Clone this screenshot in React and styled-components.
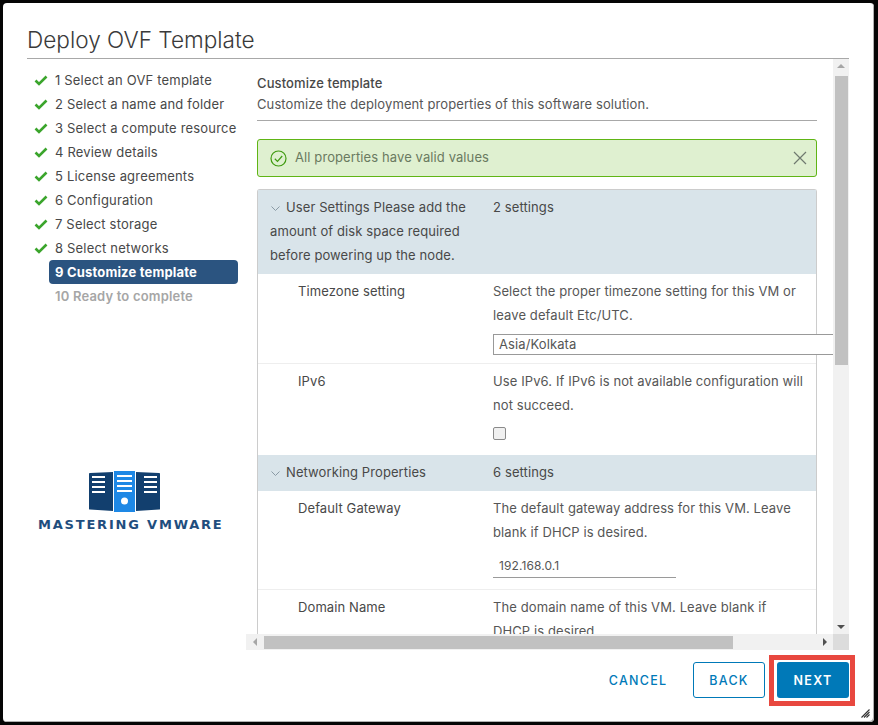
import React from "react";
import styled, { createGlobalStyle } from "styled-components";

const Global = createGlobalStyle`
  html, body { margin: 0; padding: 0; background: #000; }
  * { box-sizing: border-box; }
  body { font-family: Inter, "Open Sans", sans-serif; color: #565656; }
`;
const Page = styled.div`
  width: 878px; height: 725px; padding: 3px 4px 3px 3px; background: #050505; overflow: hidden;
`;
const Dialog = styled.div`
  position: relative; width: 871px; height: 719px; background: #fff; border-radius: 4px;
  display: flex; flex-direction: column; box-shadow: inset -1px -1px 0 #b0b0b0;
`;
const Header = styled.header`
  margin: 0 25px 0 24px; height: 56px; border-bottom: 1px solid #a8a8a8; padding-top: 22px;
`;
const Title = styled.h1`
  margin: 0; font-size: 22.6px; line-height: 30px; font-weight: 300; color: #3a3a3a; white-space: nowrap;
`;
const Body = styled.div`
  display: flex; height: 591px; margin-right: 25px;
`;
const Side = styled.aside`
  width: 243px; flex: none; padding: 9px 8px 0 32px; display: flex; flex-direction: column;
`;
const Step = styled.div`
  height: 24px; display: flex; align-items: center; font-size: 13px; letter-spacing: 0.18px; white-space: nowrap;
  font-weight: ${p => (p.$active ? 700 : p.$todo ? 600 : 400)};
  color: ${p => (p.$active ? "#fff" : p.$todo ? "#a6a6a6" : "#484848")};
  margin-left: 14px; padding-left: 6px; position: relative; border-radius: 4px;
  background: ${p => (p.$active ? "#2b5480" : "transparent")};
`;
const StepCheck = styled.svg`
  position: absolute; left: -15px; top: 6px; width: 14px; height: 12px;
`;
const Logo = styled.div`
  margin: 163px 0 0 3px; width: 190px; display: flex; flex-direction: column; align-items: flex-start;
`;
const LogoIcon = styled.svg`
  margin-left: 51px; flex: none;
`;
const LogoText = styled.div`
  font-family: "DejaVu Sans", sans-serif; font-weight: 700; font-size: 13px; letter-spacing: 1.8px;
  color: #1f4e7e; line-height: 14px; margin-top: 6px; white-space: nowrap;
`;
const Panel = styled.section`
  width: 603px; flex: none; display: grid; grid-template-columns: 587px 16px; grid-template-rows: 575px 16px;
`;
const Viewport = styled.div`
  overflow: hidden; padding: 14px 16px 0 11px;
`;
const Heading = styled.div`
  font-size: 13px; letter-spacing: 0.1px; font-weight: 500; line-height: 20px; color: #484848;
`;
const Sub = styled.div`
  font-size: 13px; letter-spacing: 0.1px; line-height: 20px; color: #565656; white-space: nowrap;
  padding: 1px 0 6px; border-bottom: 1px solid #a8a8a8;
`;
const Alert = styled.div`
  margin-top: 18px; height: 38px; border: 1px solid #60b515; border-radius: 3px; background: #dff0d0;
  display: flex; align-items: center; padding: 0 9px 0 12px; font-size: 13px; letter-spacing: 0.1px; color: #6a7a60;
`;
const AlertText = styled.span` margin: 0 0 2px 8px; flex: 1; `;
const Table = styled.div`
  margin-top: 12px; border: 1px solid #ccc; border-bottom: none; border-radius: 3px 3px 0 0;
`;
const Group = styled.div`
  display: grid; grid-template-columns: 235px minmax(0, 1fr); background: #d9e4ea; padding: 5px 0 7px; color: #484848;
  font-size: 13px; letter-spacing: 0.1px; line-height: 24px;
`;
const GroupName = styled.div` padding-left: 12px; padding-right: 10px; `;
const Chevron = styled.svg` width: 11px; height: 7px; margin-right: 5px; `;
const Row = styled.div`
  display: grid; grid-template-columns: 235px minmax(0, 1fr); padding: 5px 0 ${p => p.$pb}px; font-size: 13px; letter-spacing: 0.1px; line-height: 24px;
  border-bottom: ${p => (p.$line ? "1px solid #eee" : "none")};
`;
const Label = styled.div` padding-left: 40px; color: #484848; `;
const Desc = styled.div` padding-right: ${p => p.$pr ?? 14}px; color: #565656; `;
const SelectBox = styled.div`
  width: 360px; height: 21px; margin-top: 7px; border: 1px solid #999; border-right: none; padding-left: 5px;
  font-size: 13px; line-height: 19px; color: #565656; background: #fff;
`;
const Check = styled.div`
  width: 13px; height: 13px; margin-top: 10px; border: 1px solid #8a8a8a; border-radius: 2px; background: #f0f0f0;
`;
const TextInput = styled.div`
  width: 183px; height: 23px; margin-top: 11px; border-bottom: 1px solid #9a9a9a; padding-left: 6px;
  font-size: 12px; line-height: 21px; color: #565656;
`;
const VBar = styled.div`
  background: #f1f1f1; display: flex; flex-direction: column; align-items: center; padding-top: 5px;
`;
const Thumb = styled.div`
  background: #c1c1c1; flex: none;
`;
const VThumb = styled(Thumb)` width: 13px; height: 289px; margin-top: 8px; `;
const Arrow = styled.div`
  width: 0; height: 0; flex: none; border-style: solid;
`;
const ArrowUp = styled(Arrow)` border-width: 0 4px 4px; border-color: transparent transparent #a6a6a6; `;
const ArrowDown = styled(Arrow)` border-width: 4px 4px 0; border-color: #505050 transparent transparent; margin-top: auto; margin-bottom: 5px; `;
const HBar = styled.div`
  background: #f1f1f1; display: flex; align-items: center; padding-left: 7px;
`;
const ArrowLeft = styled(Arrow)` border-width: 4px 4px 4px 0; border-color: transparent #a6a6a6 transparent transparent; `;
const HThumb = styled(Thumb)` width: 469px; height: 13px; margin-left: 7px; `;
const ArrowRight = styled(Arrow)` border-width: 4px 0 4px 4px; border-color: transparent transparent transparent #505050; margin-left: auto; margin-right: 6px; `;
const Corner = styled.div` background: #dcdcdc; `;
const Footer = styled.footer`
  flex: 1; display: flex; align-items: flex-start; justify-content: flex-end; padding: 12px 25px 0 0; gap: 12px;
`;
const Btn = styled.div`
  width: 72px; height: 36px; border-radius: 3px; display: flex; align-items: center; justify-content: center;
  padding-top: 1px; font-size: 12.5px; font-weight: 500; letter-spacing: 1.25px;
  color: ${p => (p.$primary ? "#fff" : "#0079b8")};
  background: ${p => (p.$primary ? "#0079b8" : "#fff")};
  border: ${p => (p.$outline ? "1px solid #0079b8" : "none")};
  margin-right: ${p => p.$mr || 0}px;
  ${p => p.$primary && "font-weight: 600;"}
`;
const Highlight = styled.div`
  position: absolute; left: 766px; top: 652px; width: 86px; height: 51px; border: 5px solid #e8483f;
`;
const Grip = styled.svg`
  position: absolute; left: 858px; top: 706px; width: 9px; height: 9px;
`;

const steps = ["1 Select an OVF template","2 Select a name and folder","3 Select a compute resource","4 Review details","5 License agreements","6 Configuration","7 Select storage","8 Select networks"];

const Tick = () => (
  <StepCheck viewBox="0 0 14 12"><path d="M1.5 6.5 L5 10 L12.5 2.5" fill="none" stroke="#3ba52c" strokeWidth="2.6" /></StepCheck>
);
const Chev = () => (
  <Chevron viewBox="0 0 11 7"><path d="M1.5 1.5 L5.5 5.5 L9.5 1.5" fill="none" stroke="#8a9aa5" strokeWidth="1" /></Chevron>
);

export default function App() {
  return (
    <Page>
      <Global />
      <Dialog>
        <Header><Title>Deploy OVF Template</Title></Header>
        <Body>
          <Side>
            {steps.map(s => <Step key={s}><Tick />{s}</Step>)}
            <Step $active>9 Customize template</Step>
            <Step $todo>10 Ready to complete</Step>
            <Logo>
              <LogoIcon width="72" height="41" viewBox="0 0 72 41">
                <path d="M0 2.5 Q0 2 1 2 L24 1 V40 L1 38.5 Q0 38.5 0 38 Z" fill="#123f6e" />
                <path d="M71 2.5 Q71 2 70 2 L47 1 V40 L70 38.5 Q71 38.5 71 38 Z" fill="#123f6e" />
                <rect x="25" y="0" width="21" height="41" fill="#1e88e5" />
                <path d="M3 5h13v2H3zM3 10h13v2H3zM3 15h13v2H3zM3 20h13v2H3z" fill="#fff" />
                <path d="M28 4h15v2H28zM28 9h15v2H28zM28 14h15v2H28zM28 19h15v2H28z" fill="#fff" />
                <path d="M55 5h13v2H55zM55 10h13v2H55zM55 15h13v2H55zM55 20h13v2H55z" fill="#fff" />
                <circle cx="35.5" cy="30" r="3.5" fill="#fff" />
              </LogoIcon>
              <LogoText>MASTERING VMWARE</LogoText>
            </Logo>
          </Side>
          <Panel>
            <Viewport>
              <Heading>Customize template</Heading>
              <Sub>Customize the deployment properties of this software solution.</Sub>
              <Alert>
                <svg width="17" height="17" viewBox="0 0 17 17">
                  <circle cx="8.5" cy="8.5" r="7.5" fill="none" stroke="#3f9a10" strokeWidth="1.2" />
                  <path d="M4.8 8.8 L7.5 11.4 L12.2 6" fill="none" stroke="#3f9a10" strokeWidth="1.2" />
                </svg>
                <AlertText>All properties have valid values</AlertText>
                <svg width="14" height="14" viewBox="0 0 14 14">
                  <path d="M1 1 L13 13 M13 1 L1 13" stroke="#6f7a70" strokeWidth="1.2" />
                </svg>
              </Alert>
              <Table>
                <Group>
                  <GroupName><Chev />User Settings Please add the amount of disk space required before powering up the node.</GroupName>
                  <div>2 settings</div>
                </Group>
                <Row $pb={8} $line>
                  <Label>Timezone setting</Label>
                  <Desc>
                    Select the proper timezone setting for this VM or leave default Etc/UTC.
                    <SelectBox>Asia/Kolkata</SelectBox>
                  </Desc>
                </Row>
                <Row $pb={15}>
                  <Label>IPv6</Label>
                  <Desc $pr={4}>
                    Use IPv6. If IPv6 is not available configuration will not succeed.
                    <Check />
                  </Desc>
                </Row>
                <Group>
                  <GroupName><Chev />Networking Properties</GroupName>
                  <div>6 settings</div>
                </Group>
                <Row $pb={11} $line>
                  <Label>Default Gateway</Label>
                  <Desc>
                    The default gateway address for this VM. Leave blank if DHCP is desired.
                    <TextInput>192.168.0.1</TextInput>
                  </Desc>
                </Row>
                <Row $pb={11}>
                  <Label>Domain Name</Label>
                  <Desc>The domain name of this VM. Leave blank if DHCP is desired.</Desc>
                </Row>
              </Table>
            </Viewport>
            <VBar><ArrowUp /><VThumb /><ArrowDown /></VBar>
            <HBar><ArrowLeft /><HThumb /><ArrowRight /></HBar>
            <Corner />
          </Panel>
        </Body>
        <Footer>
          <Btn $mr={7}>CANCEL</Btn>
          <Btn $outline>BACK</Btn>
          <Btn $primary>NEXT</Btn>
        </Footer>
        <Highlight />
        <Grip viewBox="0 0 9 9"><path d="M8.5 .5 L.5 8.5 M8.5 3 L3 8.5 M8.5 5.5 L5.5 8.5" stroke="#333" strokeWidth="1.1" /></Grip>
      </Dialog>
    </Page>
  );
}
